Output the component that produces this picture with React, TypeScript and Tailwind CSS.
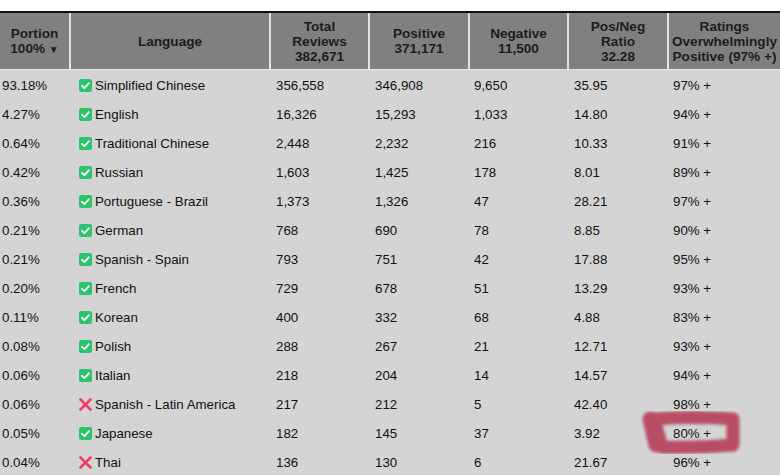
import React from "react"

type Row = [string, boolean, string, string, string, string, string, string]

const rows: Row[] = [
  ["93.18%", true, "Simplified Chinese", "356,558", "346,908", "9,650", "35.95", "97% +"],
  ["4.27%", true, "English", "16,326", "15,293", "1,033", "14.80", "94% +"],
  ["0.64%", true, "Traditional Chinese", "2,448", "2,232", "216", "10.33", "91% +"],
  ["0.42%", true, "Russian", "1,603", "1,425", "178", "8.01", "89% +"],
  ["0.36%", true, "Portuguese - Brazil", "1,373", "1,326", "47", "28.21", "97% +"],
  ["0.21%", true, "German", "768", "690", "78", "8.85", "90% +"],
  ["0.21%", true, "Spanish - Spain", "793", "751", "42", "17.88", "95% +"],
  ["0.20%", true, "French", "729", "678", "51", "13.29", "93% +"],
  ["0.11%", true, "Korean", "400", "332", "68", "4.88", "83% +"],
  ["0.08%", true, "Polish", "288", "267", "21", "12.71", "93% +"],
  ["0.06%", true, "Italian", "218", "204", "14", "14.57", "94% +"],
  ["0.06%", false, "Spanish - Latin America", "217", "212", "5", "42.40", "98% +"],
  ["0.05%", true, "Japanese", "182", "145", "37", "3.92", "80% +"],
  ["0.04%", false, "Thai", "136", "130", "6", "21.67", "96% +"],
]

const cols = "grid grid-cols-[69px_198px_97px_98px_97px_98px_111px] gap-x-[2px]"

function CheckIcon() {
  return (
    <svg width="13" height="13" viewBox="0 0 13 13" className="shrink-0">
      <rect x="0" y="0" width="13" height="13" rx="2" fill="#2bc46a" />
      <path d="M3 6.8 L5.4 9.1 L10 4.2" fill="none" stroke="#fff" strokeWidth="1.8" strokeLinecap="round" strokeLinejoin="round" />
    </svg>
  )
}

function CrossIcon() {
  return (
    <svg width="13" height="13" viewBox="0 0 13 13" className="shrink-0">
      <path d="M1.5 1.5 L11.5 11.5 M11.5 1.5 L1.5 11.5" fill="none" stroke="#ee3e62" strokeWidth="2.6" strokeLinecap="round" />
    </svg>
  )
}

function HeaderCell({ children }: { children: React.ReactNode }) {
  return (
    <div className="bg-[#808080] flex items-center justify-center text-center font-bold text-[13.6px] leading-[15px] text-[#1c1c1c]">
      <div>{children}</div>
    </div>
  )
}

export default function App() {
  return (
    <div
      className="relative w-[780px] h-[475px] overflow-hidden bg-white"
      style={{ fontFamily: '"Liberation Sans", Arial, sans-serif' }}
    >
      <div className="h-[11px] bg-white" />
      <div className="h-[2px] bg-[#111]" />

      <div className="bg-[#d4d4d4]">
        {/* Header */}
        <div className={`${cols} h-[56px] bg-[#e2e2e2]`}>
          <HeaderCell>
            Portion
            <br />
            100% <span className="text-[10px] align-middle">▼</span>
          </HeaderCell>
          <HeaderCell>Language</HeaderCell>
          <HeaderCell>
            Total
            <br />
            Reviews
            <br />
            382,671
          </HeaderCell>
          <HeaderCell>
            Positive
            <br />
            371,171
          </HeaderCell>
          <HeaderCell>
            Negative
            <br />
            11,500
          </HeaderCell>
          <HeaderCell>
            Pos/Neg
            <br />
            Ratio
            <br />
            32.28
          </HeaderCell>
          <HeaderCell>
            Ratings
            <br />
            Overwhelmingly
            <br />
            Positive (97% +)
          </HeaderCell>
        </div>
        <div className="h-[1px] bg-[#e2e2e2]" />

        {/* Body */}
        <div className="text-[13.3px] text-[#111]">
          {rows.map((r) => (
            <div key={r[2]} className={`${cols} h-[29px] items-center pt-[2px]`}>
              <div className="pl-[2px]">{r[0]}</div>
              <div className="pl-[8px] flex items-center gap-[3px]">
                {r[1] ? <CheckIcon /> : <CrossIcon />}
                <span>{r[2]}</span>
              </div>
              <div className="pl-[5px]">{r[3]}</div>
              <div className="pl-[5px]">{r[4]}</div>
              <div className="pl-[4px]">{r[5]}</div>
              <div className="pl-[5px]">{r[6]}</div>
              <div className="pl-[4px]">{r[7]}</div>
            </div>
          ))}
        </div>
      </div>

      {/* Hand-drawn highlight */}
      <svg className="absolute left-[636px] top-[405px] pointer-events-none" width="112" height="56" viewBox="0 0 112 56">
        <defs>
          <filter id="soft" x="-20%" y="-20%" width="140%" height="140%">
            <feGaussianBlur stdDeviation="1.7" />
          </filter>
        </defs>
        <g filter="url(#soft)" stroke="#b43f5a" strokeLinecap="round" strokeLinejoin="round" fill="none" opacity="0.9">
          <path d="M18 14 Q57 11 97 14 L97 40 Q60 43 26 42 Z" strokeWidth="13" />
          <path d="M14 14 L20 40" strokeWidth="15" />
        </g>
      </svg>
    </div>
  )
}
